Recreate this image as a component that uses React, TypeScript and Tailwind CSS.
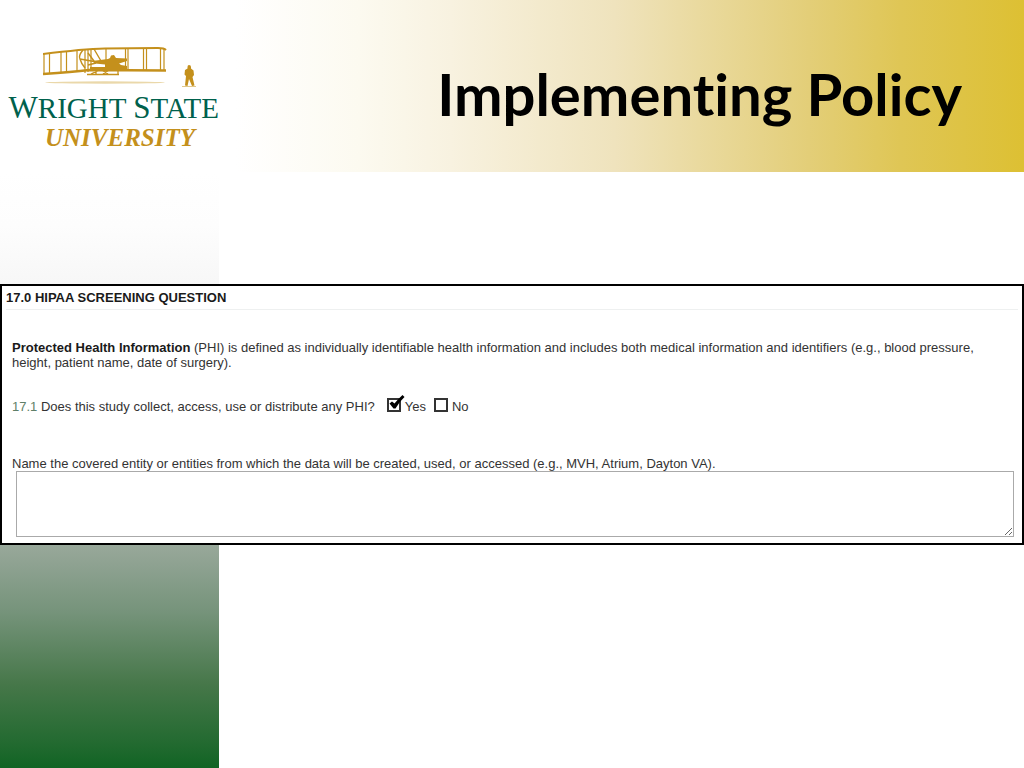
import { useState } from 'react';

type AnswerProps = {
  id: string;
  label: string;
  checked: boolean;
  onChange: () => void;
};

function Answer({ id, label, checked, onChange }: AnswerProps) {
  return (
    <span className="flex items-center gap-1">
      <span className="relative flex pb-0.5">
        <input
          id={id}
          type="checkbox"
          checked={checked}
          onChange={onChange}
          className="size-3.5 appearance-none border-2 border-[#333] bg-white"
        />
        {checked && (
          <svg viewBox="0 0 18 18" className="pointer-events-none absolute -top-1 left-0 size-[18px]">
            <path d="M2.500 9.500 L5 7.500 L7.500 9.500 Q11 5 15.500 1 L17.500 3 Q12 8 8.500 14.500 L6.500 14.500 Z" fill="#000" />
          </svg>
        )}
      </span>
      <label htmlFor={id}>{label}</label>
    </span>
  );
}

function Flyer() {
  return (
    <svg viewBox="0 0 160 42" className="mr-4 w-40" fill="none" stroke="#c4901c" aria-hidden="true">
      {/* wings */}
      <path d="M0 8 Q40 3 62 2.5 L115 2 Q121 2 123 4" strokeWidth="2" />
      <path d="M0 28 Q30 26 46 24 L123 24.5" strokeWidth="2.4" />
      <path
        d="M1 8V28 M6.500 7V27 M18 6V26.500 M23.500 5.500V26 M34 4.500V25 M42 3.500V27 M45 3V26 M48 3V25 M63 3V24 M82.500 3V24 M85 3V24 M100.500 3V24 M103.500 3V24 M117.500 3V24 M121 3V24"
        strokeWidth="1.2"
      />
      {/* propeller, engine and pilot */}
      <path d="M40 4 Q35 10 37 13 Q38 17 42 22 M37 13 L54 16 M51 3 L58 15 M45 7 L51 15 M45 19 L53 17" strokeWidth="1.4" />
      <path d="M49 15 L65 13 L67 12 L68 9.500 L71 9 L73 12 L84 12.500 L84 15 L76 17.500 L78 19 L84 20 V25 H47 V21 H62 V18.500 L52 17.500 Z" fill="#c4901c" stroke="none" />
      {/* skids */}
      <path d="M44 28.500 H76 M48 28 L56 24 M53 24 V28 M59 24 L65 28 M60 28 L66 24 M75 24 V28" strokeWidth="1.3" />
      <ellipse cx="62" cy="36.500" rx="60" ry="1.2" fill="#ead8aa" stroke="none" />
      {/* man on the ground */}
      <path
        d="M144.500 21 Q144.500 19 146 19 Q148 19 148 21 L148 22.500 L150.500 24.500 L151 29 L149.500 31 L151.500 39.500 L149 40 L146 33 L144.500 40 L142 39.500 L143 30 L141.500 28.500 L142 24 L144.500 22.500 Z"
        fill="#c4901c"
        stroke="none"
      />
      <path d="M139 40.500 H153" stroke="#e0c88c" strokeWidth="1" />
    </svg>
  );
}

function Logo() {
  return (
    <div className="flex w-[219px] shrink-0 flex-col items-end pt-[46px] font-['Liberation_Serif',serif]">
      <Flyer />
      <p className="text-[29px] leading-10 whitespace-nowrap text-[#00614c]">
        <span className="text-[31px]">W</span>RIGHT <span className="text-[31px]">S</span>TATE
      </p>
      <p className="mr-6 text-[25px] leading-5 font-bold text-[#c4901c] italic">UNIVERSITY</p>
    </div>
  );
}

export default function App() {
  const [answer, setAnswer] = useState('yes');
  const [entities, setEntities] = useState('');

  return (
    <div className="flex min-h-screen flex-col bg-white">
      <header className="flex min-h-[172px] bg-[linear-gradient(to_right,#ffffff_23%,#fcfaf0_35%,#f8f2e0_44%,#efe3bd_60%,#e3ce78_79%,#dfc655_88%,#ddc033_100%)]">
        <Logo />
        <h1 className="flex-1 pt-[54px] pr-[62px] text-right font-['Lato',sans-serif] text-[58px] leading-20 font-bold text-black [font-variant-ligatures:none]">
          Implementing Policy
        </h1>
      </header>

      <main className="flex-1 bg-[linear-gradient(to_bottom,#ffffff_0%,#fdfdfd_9%,#f7f7f7_19%,#9aa99c_62%,#75937a_74%,#467749_86%,#226a30_96%,#116424_100%)] bg-[length:219px_100%] bg-no-repeat pt-28">
        <form className="border-2 border-black bg-white pb-1.5 font-['Liberation_Sans',sans-serif] text-[13px] leading-[15px] text-[#333]">
          <h2 className="mx-1 mt-1 border-b border-[#eef0f0] pb-1 font-bold text-[#1a1a1a]">
            17.0 HIPAA SCREENING QUESTION
          </h2>

          <p className="mt-[30px] px-2.5">
            <strong className="text-[#1a1a1a]">Protected Health Information</strong> (PHI) is defined as individually
            identifiable health information and includes both medical information and identifiers (e.g., blood
            pressure, height, patient name, date of surgery).
          </p>

          <div className="mt-7 flex items-center gap-3 px-2.5">
            <p>
              <span className="text-[#5f7f68]">17.1</span> Does this study collect, access, use or distribute any PHI?
            </p>
            <div className="flex gap-2">
              <Answer id="phi-yes" label="Yes" checked={answer === 'yes'} onChange={() => setAnswer('yes')} />
              <Answer id="phi-no" label="No" checked={answer === 'no'} onChange={() => setAnswer('no')} />
            </div>
          </div>

          <label htmlFor="entities" className="mt-[42px] block px-2.5">
            Name the covered entity or entities from which the data will be created, used, or accessed (e.g., MVH,
            Atrium, Dayton VA).
          </label>
          <div className="flex pr-2 pl-3.5">
            <textarea
              id="entities"
              value={entities}
              onChange={(e) => setEntities(e.target.value)}
              className="h-[66px] w-full resize border border-[#aaa] bg-white p-1 focus:outline-none"
            />
          </div>
        </form>
      </main>
    </div>
  );
}
